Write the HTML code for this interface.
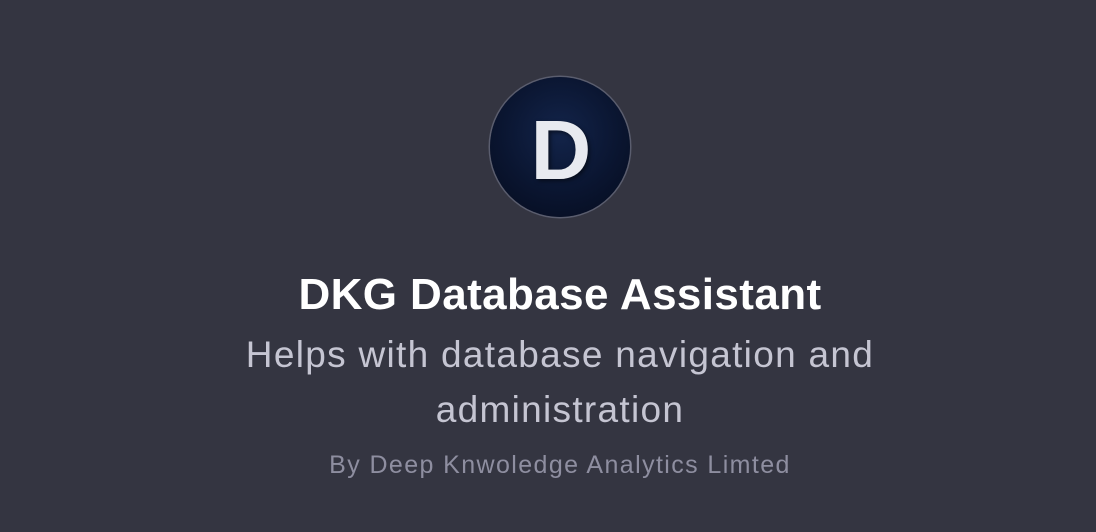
<!DOCTYPE html>
<html><head><style>
html,body{margin:0;padding:0;}
body{width:1096px;height:532px;background:#343541;font-family:"Liberation Sans",sans-serif;position:relative;overflow:hidden;}
.logo{position:absolute;left:490px;top:77px;width:140px;height:140px;border-radius:50%;background:radial-gradient(circle at 50% 40%,#13244a 0%,#0a1530 55%,#050b1c 100%);box-shadow:0 0 0 1.5px #5a5d6e;}
.logo span{position:absolute;left:2px;right:0;top:31px;text-align:center;font-weight:bold;font-size:84px;line-height:84px;color:#e8eaf0;text-shadow:2px 2px 4px rgba(0,0,0,.5);}
.t{position:absolute;left:12px;width:1096px;text-align:center;}
.h{top:270px;font-size:44px;letter-spacing:0.4px;font-weight:bold;color:#fff;line-height:50px;}
.s{top:327px;font-size:37px;letter-spacing:1.3px;color:#c5c5d2;line-height:55px;}
.b{top:450px;font-size:25px;letter-spacing:1.4px;color:#8e8ea0;line-height:30px;}
</style></head><body>
<div class="logo"><span>D</span></div>
<div class="t h">DKG Database Assistant</div>
<div class="t s">Helps with database navigation and<br>administration</div>
<div class="t b">By Deep Knwoledge Analytics Limted</div>
</body></html>
